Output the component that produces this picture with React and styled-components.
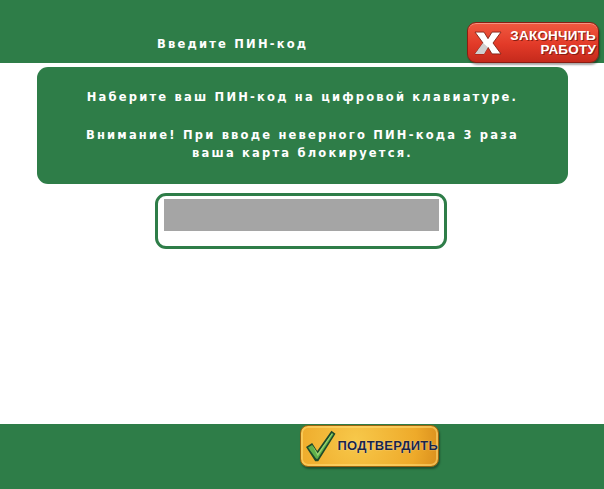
import React from "react";
import styled, { createGlobalStyle } from "styled-components";

const GREEN = "#2e7d48";

const GlobalStyle = createGlobalStyle`
  html, body {
    margin: 0;
    padding: 0;
    background: #ffffff;
  }
  body {
    font-family: "DejaVu Sans", Verdana, sans-serif;
  }
`;

const Screen = styled.div`
  width: 604px;
  height: 489px;
  display: flex;
  flex-direction: column;
  background: #ffffff;
  overflow: hidden;
`;

const Header = styled.header`
  height: 63px;
  flex: none;
  background: ${GREEN};
  display: flex;
  align-items: flex-start;
  justify-content: space-between;
  padding: 0 5px 0 157px;
  box-sizing: border-box;
`;

const SpacedText = styled.div`
  color: #ffffff;
  font-weight: bold;
  font-size: 11.5px;
  letter-spacing: 2.2px;
  line-height: 18px;
  white-space: nowrap;
`;

const Title = styled(SpacedText)`
  margin-top: 35px;
`;

const ExitButton = styled.button`
  margin-top: 22px;
  width: 132px;
  height: 41px;
  box-sizing: border-box;
  border: 1px solid #8a1d12;
  border-radius: 9px;
  background: linear-gradient(#f05a40, #e23a28 55%, #c52a1c);
  box-shadow: inset 0 1px 0 rgba(255, 255, 255, 0.35), 1px 2px 2px rgba(0, 0, 0, 0.35);
  display: flex;
  align-items: center;
  justify-content: space-between;
  padding: 0 2px 0 6px;
  cursor: pointer;
`;

const ButtonLabel = styled.span`
  font-family: "Liberation Sans", Arial, sans-serif;
  font-weight: bold;
  font-size: ${(p) => p.$size || 13}px;
  line-height: 14px;
  text-align: right;
  color: ${(p) => p.$color};
  text-shadow: ${(p) => p.$shadow || "none"};
  letter-spacing: 0.2px;
`;

const Main = styled.main`
  flex: 1;
  display: flex;
  flex-direction: column;
  align-items: center;
  padding-top: 4px;
`;

const InfoPanel = styled.section`
  width: 531px;
  height: 117px;
  margin-left: 1px;
  box-sizing: border-box;
  background: ${GREEN};
  border-radius: 11px;
  display: flex;
  flex-direction: column;
  align-items: center;
  padding-top: 21px;
  gap: 20px;
  text-align: center;
`;

const PinFrame = styled.div`
  margin-top: 9px;
  margin-right: 2px;
  width: 292px;
  height: 56px;
  box-sizing: border-box;
  border: 3px solid ${GREEN};
  border-radius: 11px;
  padding: 3px 5px 0 6px;
`;

const PinField = styled.div`
  height: 32px;
  background: #a5a5a5;
`;

const Footer = styled.footer`
  height: 65px;
  flex: none;
  background: ${GREEN};
  display: flex;
  justify-content: flex-start;
  padding: 1px 0 0 300px;
  box-sizing: border-box;
`;

const ConfirmButton = styled.button`
  width: 139px;
  height: 42px;
  box-sizing: border-box;
  border: 1px solid #9a6410;
  border-radius: 8px;
  background: radial-gradient(circle at 40% 35%, #f7c84a, #eeaa2a 70%, #d98e1c);
  box-shadow: inset 0 0 0 2px rgba(255, 220, 120, 0.55), 1px 2px 2px rgba(0, 0, 0, 0.35);
  display: flex;
  align-items: center;
  gap: 1px;
  padding: 0 0 0 3px;
  cursor: pointer;
`;

const CrossIcon = () => (
  <svg width="28" height="24" viewBox="0 0 28 22" preserveAspectRatio="none">
    <path
      d="M1 1 H10 L14 7 L18 1 H27 L19 11 L27 21 H18 L14 15 L10 21 H1 L9 11 Z"
      fill="#ffffff"
      stroke="#7a1a10"
      strokeWidth="0.8"
    />
    <path d="M9 11 L1 21 H10 L14 15 Z" fill="#cfcfcf" />
  </svg>
);

const CheckIcon = () => (
  <svg width="33" height="36" viewBox="0 0 32 34">
    <path d="M2 18 L8 14 L13 22 L27 2 L31 5 L14 32 L11 32 Z" fill="#1e4a2a" />
    <path
      d="M4 18.5 L8 16 L13.5 24.5 L27.5 4.5 L29 5.5 L13.5 29.5 L12 29.5 Z"
      fill="#5fb04a"
    />
    <path d="M8 16 L13.5 24.5 L27.5 4.5 L28.3 5 L13.5 27 Z" fill="#9ad070" />
  </svg>
);

export default function App() {
  return (
    <Screen>
      <GlobalStyle />
      <Header>
        <Title>Введите ПИН-код</Title>
        <ExitButton>
          <CrossIcon />
          <ButtonLabel $size={13.5} $color="#ffffff" $shadow="1px 1px 0 #8a1d12">
            ЗАКОНЧИТЬ
            <br />
            РАБОТУ
          </ButtonLabel>
        </ExitButton>
      </Header>
      <Main>
        <InfoPanel>
          <SpacedText>Наберите ваш ПИН-код на цифровой клавиатуре.</SpacedText>
          <SpacedText>
            Внимание! При вводе неверного ПИН-кода 3 раза
            <br />
            ваша карта блокируется.
          </SpacedText>
        </InfoPanel>
        <PinFrame>
          <PinField />
        </PinFrame>
      </Main>
      <Footer>
        <ConfirmButton>
          <CheckIcon />
          <ButtonLabel $size={13} $color="#1b2442" $shadow="0 0 1px #ffffff">
            ПОДТВЕРДИТЬ
          </ButtonLabel>
        </ConfirmButton>
      </Footer>
    </Screen>
  );
}
